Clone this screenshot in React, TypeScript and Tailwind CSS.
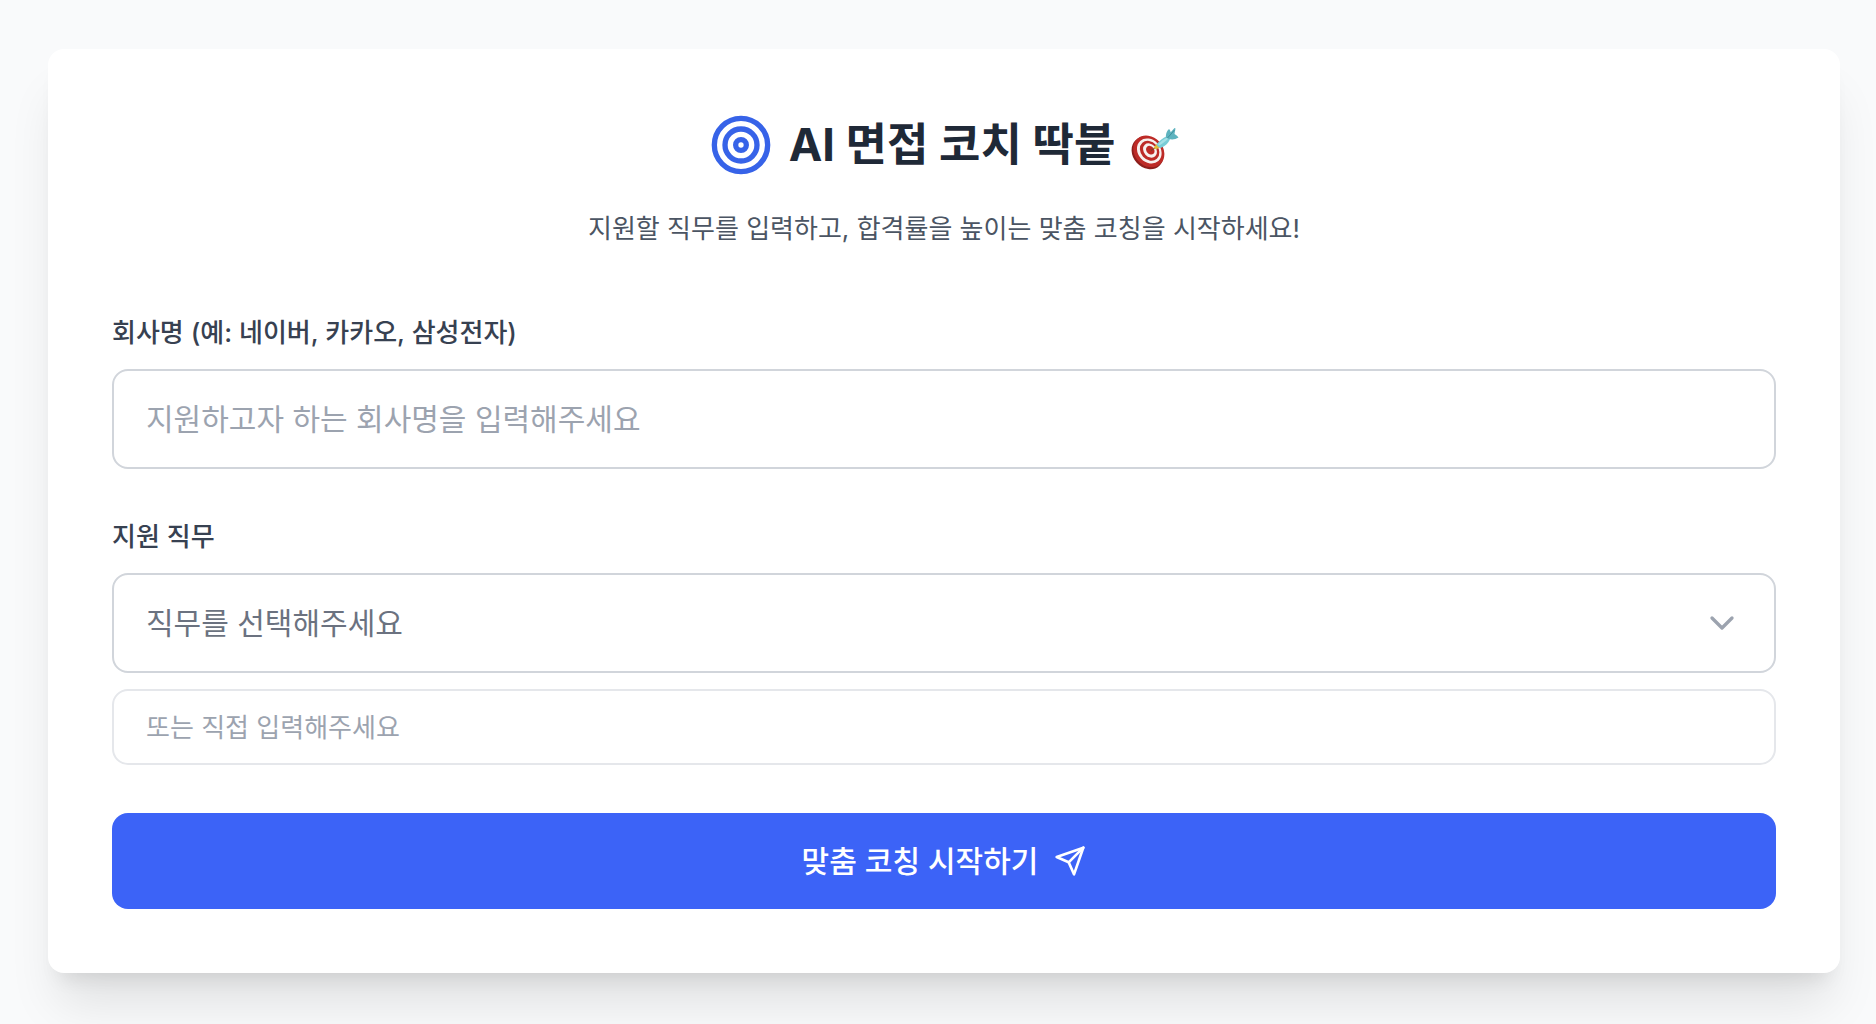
import { useState } from 'react';
import { ChevronDown, Target } from 'lucide-react';
import { FiSend } from 'react-icons/fi';

// ==================== OPTIONS ====================

const JOB_OPTIONS = ['프론트엔드 개발자', '백엔드 개발자', '데이터 분석가', '서비스 기획자', '마케터'];

// ==================== ICONS ====================

function DartIcon() {
    return (
        <svg className="mt-2 h-11 w-12" viewBox="0 0 48 44" fill="none" aria-hidden="true">
            {/* Board */}
            <ellipse cx="16.5" cy="26" rx="14.5" ry="17.5" transform="rotate(-42 16.5 26)" fill="#8c1f1c" />
            <ellipse cx="17.8" cy="24.4" rx="14.3" ry="17" transform="rotate(-42 17.8 24.4)" fill="#bd2b27" />
            <ellipse cx="18.3" cy="24" rx="11.2" ry="13.6" transform="rotate(-42 18.3 24)" fill="#f7f1ef" />
            <ellipse cx="18.6" cy="23.8" rx="8.8" ry="10.8" transform="rotate(-42 18.6 23.8)" fill="#bd2b27" />
            <ellipse cx="19" cy="23.5" rx="6.2" ry="7.8" transform="rotate(-42 19 23.5)" fill="#f7f1ef" />
            <ellipse cx="19.3" cy="23.2" rx="3.8" ry="4.8" transform="rotate(-42 19.3 23.2)" fill="#bd2b27" />
            {/* Dart */}
            <path d="M20 23.5l4-2.5" stroke="#6b4a2a" strokeWidth="1" />
            <path d="M22.5 21l3.5-4.5 4 3.5-5 2.2z" fill="#e3bd3c" />
            <path d="M25.5 17.5c2.500-3.500 6-6.500 10.500-8.500l3 3c-1.500 4-5 7.500-9.500 9-1.500-.5-3-1.800-4-3.500z" fill="#79ccd6" />
            <path d="M27 17.500c2.500-3 5.500-5.300 9-7l1.200 1.200c-2.500 2.500-5.500 4.800-9 6.800z" fill="#a5e0e6" />
            <path d="M35 10.500c-.5-3 .5-6.500 3-8.500 1 1 1.500 2 1.700 3.300L43.500 1l1 .5-1 5.500c1.500.8 3 2 4 3.500-3 2-6.500 2.500-9.500 1.500z" fill="#5eb3bf" />
            <path d="M36.500 11l7-8" stroke="#418f9c" strokeWidth="1" />
        </svg>
    );
}

// ==================== COMPONENTS ====================

export default function App() {
    const [company, setCompany] = useState('');
    const [job, setJob] = useState('');
    const [customJob, setCustomJob] = useState('');

    return (
        <div className="min-h-screen bg-[#f9fafb] pt-[49px] pr-9 pb-12 pl-12 font-['Inter','Noto_Sans_CJK_KR',sans-serif]">
            <main className="rounded-2xl bg-white p-16 shadow-[0_40px_50px_-10px_rgba(0,0,0,0.1),0_16px_20px_-12px_rgba(0,0,0,0.1)]">
                {/* Header */}
                <header className="mb-16 flex flex-col items-center gap-8 text-center">
                    <div className="flex items-center gap-4">
                        <Target className="h-16 w-16 text-[#3763e8]" />
                        <h1 className="flex items-center gap-4 text-[45px] leading-16 font-bold text-[#1f2937]">
                            AI 면접 코치 딱붙
                            <DartIcon />
                        </h1>
                    </div>
                    <p className="text-[26px] leading-10 text-[#4b5563]">
                        지원할 직무를 입력하고, 합격률을 높이는 맞춤 코칭을 시작하세요!
                    </p>
                </header>

                <form className="flex flex-col gap-12" onSubmit={e => e.preventDefault()}>
                    {/* Company */}
                    <div className="flex flex-col gap-4">
                        <label htmlFor="company" className="text-[26px] leading-10 font-medium text-[#374151]">
                            회사명 (예: 네이버, 카카오, 삼성전자)
                        </label>
                        <input
                            id="company"
                            type="text"
                            value={company}
                            onChange={e => setCompany(e.target.value)}
                            placeholder="지원하고자 하는 회사명을 입력해주세요"
                            className="h-[100px] w-full rounded-2xl border-2 border-[#d1d5db] px-8 text-[30px] text-[#1f2937] placeholder:text-[#9ca3af]"
                        />
                    </div>

                    {/* Job */}
                    <div className="flex flex-col gap-4">
                        <label htmlFor="job" className="text-[26px] leading-10 font-medium text-[#374151]">
                            지원 직무
                        </label>
                        <div className="relative">
                            <select
                                id="job"
                                value={job}
                                onChange={e => setJob(e.target.value)}
                                className="h-[100px] w-full appearance-none rounded-2xl border-2 border-[#d1d5db] bg-white px-8 text-[30px] text-[#6b7280]"
                            >
                                <option value="">직무를 선택해주세요</option>
                                {JOB_OPTIONS.map(opt => (
                                    <option key={opt} value={opt}>{opt}</option>
                                ))}
                            </select>
                            <ChevronDown className="pointer-events-none absolute inset-y-0 right-[34px] my-auto h-10 w-10 text-[#9ca3af]" />
                        </div>
                        <input
                            type="text"
                            aria-label="직무 직접 입력"
                            value={customJob}
                            onChange={e => setCustomJob(e.target.value)}
                            placeholder="또는 직접 입력해주세요"
                            className="h-19 w-full rounded-2xl border-2 border-[#e5e7eb] px-8 text-[26px] text-[#1f2937] placeholder:text-[#9ca3af]"
                        />
                    </div>

                    {/* Submit */}
                    <button
                        type="submit"
                        className="flex h-24 w-full items-center justify-center gap-4 rounded-2xl bg-[#3c63f7] text-[30px] font-medium text-white"
                    >
                        맞춤 코칭 시작하기
                        <FiSend className="h-8 w-8" />
                    </button>
                </form>
            </main>
        </div>
    );
}
